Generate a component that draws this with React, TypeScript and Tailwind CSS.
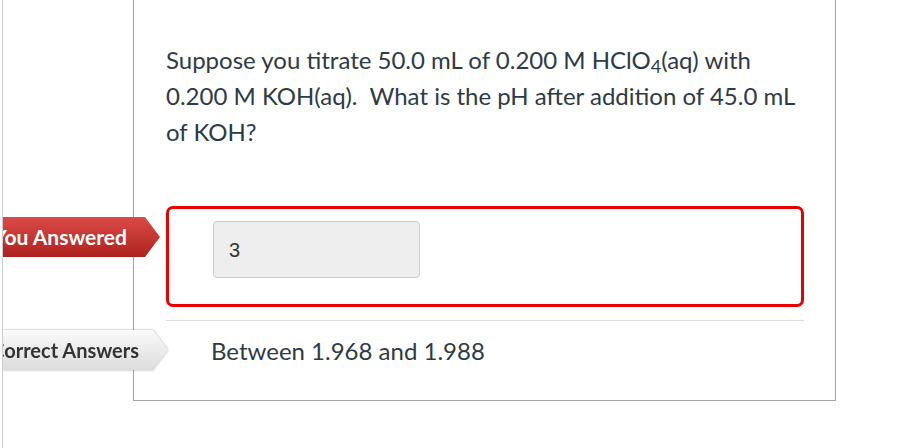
export default function App() {
  return (
    <div className="w-[900px] h-[448px] bg-white overflow-hidden pl-[2px] font-['Lato',sans-serif] text-[#2d3b45]">
      <div className="h-full border-l border-[#c7cdd1] overflow-hidden pl-[130px]">
        <div className="w-[703px] h-[401px] border-x border-b border-[#a5a5a5] pl-[32px] pr-[31px] pt-[42px]">
          <p className="text-[24px] leading-[36px]">
            Suppose you titrate 50.0 mL of 0.200 M HClO<span className="text-[18px] leading-none relative top-[4px]">4</span>(aq) with 0.200 M KOH(aq).&nbsp; What is the pH after addition of 45.0 mL of KOH?
          </p>

          <div className="relative mt-[56px]">
            <div className="absolute left-[-163px] top-[11px] w-[157px] h-[40px] flex items-center justify-end pr-[33px] bg-gradient-to-b from-[#dc4a46] to-[#ad211d] [clip-path:polygon(0_0,142px_0,157px_50%,142px_100%,0_100%)]">
              <span className="whitespace-nowrap text-white font-bold text-[21px]">You Answered</span>
            </div>
            <div className="h-[101px] border-[3px] border-[#e60000] rounded-[7px] pl-[44px] pt-[12px]">
              <div className="w-[207px] h-[57px] bg-[#eeeeee] border border-[#cccccc] rounded-[4px] flex items-center pl-[15px] font-['Liberation_Sans',sans-serif] text-[20px] text-[#333]">
                3
              </div>
            </div>
          </div>

          <div className="border-t border-[#dddddd] mt-[13px]" />

          <div className="relative mt-[10px] h-[40px] flex items-center">
            <div className="absolute left-[-163px] top-[-1px] drop-shadow-[0_0_1px_rgba(0,0,0,0.35)]">
              <div className="w-[165px] h-[40px] flex items-center justify-end pr-[29px] bg-gradient-to-b from-[#fbfbfb] to-[#dcdcdc] [clip-path:polygon(0_0,150px_0,165px_50%,150px_100%,0_100%)]">
                <span className="whitespace-nowrap text-[#333] font-bold text-[20px]">Correct Answers</span>
              </div>
            </div>
            <span className="pl-[45px] text-[24px]">Between 1.968 and 1.988</span>
          </div>
        </div>
      </div>
    </div>
  )
}
